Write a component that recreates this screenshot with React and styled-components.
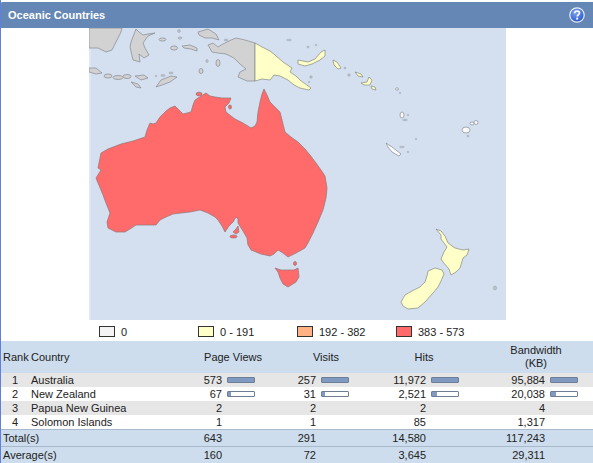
import React from 'react';
import styled, { createGlobalStyle } from 'styled-components';

const GlobalStyle = createGlobalStyle`
html, body {
  margin: 0;
  padding: 0;
  background: #fff;
  overflow: hidden;
}
`
const Panel = styled.div`
box-sizing: border-box;
width: 593px;
height: 463px;
padding-top: 2px;
border-left: 1px solid #5f80e2;
font-family: 'Liberation Sans', Arial, sans-serif;
font-size: 11px;
color: #222;
overflow: hidden;
`
const TitleBar = styled.div`
display: flex;
align-items: center;
justify-content: space-between;
height: 26px;
margin-left: -1px;
padding: 0 8px;
background: #6487b5;
border-top-left-radius: 3px;
`
const Title = styled.div`
font-size: 11px;
font-weight: bold;
color: #fff;
`
const MapArea = styled.div`
display: flex;
height: 292px;
padding-left: 88px;
`
const Legend = styled.div`
display: flex;
align-items: center;
height: 21px;
padding: 2px 0 0 98px;
box-sizing: border-box;
`
const LegendItem = styled.div`
display: flex;
align-items: center;
width: 99px;
gap: 6px;
`
const Swatch = styled.span`
box-sizing: border-box;
width: 16px;
height: 11px;
border: 1px solid #333;
background: ${p => p.$color};
`
const Row = styled.div`
display: grid;
grid-template-columns: 28px 154px 100px 86px 110px 114px;
align-items: center;
height: ${p => p.$height}px;
background: ${p => p.$bg};
border-top: ${p => p.$line ? '1px solid #a9b9cc' : 'none'};
box-sizing: border-box;
line-height: 13px;
`
const RankCell = styled.div`
text-align: center;
`
const HeadLabel = styled.div`
padding-left: 2px;
`
const CountryCell = styled.div`
padding-left: 2px;
white-space: nowrap;
`
const SummaryLabel = styled.div`
grid-column: span 2;
padding-left: 2px;
`
const HeadCell = styled.div`
text-align: center;
`
const MetricCell = styled.div`
display: flex;
align-items: center;
justify-content: flex-end;
gap: 5px;
padding-right: ${p => p.$pr}px;
`
const Num = styled.span`
text-align: right;
`
const BarSlot = styled.span`
width: 28px;
height: 6px;
flex: none;
`
const Bar = styled.span`
display: block;
box-sizing: border-box;
width: 28px;
height: 6px;
background: #fff;
border: 1px solid #6d7d96;
border-radius: 1px;
overflow: hidden;
`
const BarFill = styled.span`
display: block;
height: 100%;
background: #819ac2;
`

const ocean = '#d4dff0';
const grey = '#d2d2d2';
const yellow = '#ffffc8';
const red = '#ff6a6a';
const white = '#fbfbfb';

const AUSTRALIA = "M101 170L98 168L101 153L108 149L121 144L133 141L145 137L147 130L150 123L153 124L156 123L160 117L166 111L170 108L175 106L179 110L183 114L187 113L191 112L193 105L195 100L201 96L206 93L210 96L215 97L222 98L231 98L229 103L225 107L226 112L231 116L235 119L243 123L251 128L255 126L257 122L258 112L260 102L262 94L264 89L267 95L270 102L275 107L280 112L282 120L285 132L291 137L298 142L305 149L310 155L316 163L321 170L325 176L327 188L326 198L323 210L318 222L313 233L308 243L305 248L296 253L288 257L283 253L278 250L274 254L270 256L261 254L251 250L248 245L247 238L243 231L238 223L238 219L236 217L233 222L229 226L225 232L222 226L218 220L215 217L208 213L200 210L190 212L181 213L173 214L166 217L160 220L156 225L146 225L136 225L130 229L125 232L116 232L108 228L107 222L110 213L106 203L103 195L101 190L98 183L96 178Z";

const Map = () => (
  <svg width="417" height="292" viewBox="89 28 417 292">
    <defs>
      <filter id="soft" x="-5%" y="-5%" width="110%" height="110%">
        <feGaussianBlur stdDeviation="0.35" />
      </filter>
    </defs>
    <rect x="89" y="28" width="417" height="292" fill={ocean} />
    <rect x="89" y="28" width="2" height="292" fill="#dde8f6" />
    <g filter="url(#soft)">
      <g fill={grey} stroke="#858a90" strokeWidth="0.7" strokeLinejoin="round">
        <path d="M89 48L98 48L106 52L112 50L116 42L121 32L122 28L89 28Z" />
        <path d="M136 29L131 42L130 47L133 60L140 62L139 54L144 58L149 55L145 48L143 43L148 36L155 33L148 34L143 35L139 32Z" />
        <path d="M198 32L208 29L216 34L219 40L212 38L205 38L199 35Z" />
        <path d="M208 45L213 43L218 47L223 44L231 40L236 38L245 40L255 43L255 81L247 81L238 77L240 72L246 69L240 64L234 58L226 54L218 53L212 52Z" />
        <ellipse cx="162.500" cy="39.500" rx="3.500" ry="1.500" />
        <ellipse cx="174" cy="48" rx="3.500" ry="2" />
        <path d="M182 46L190 45L197 48L197 51L191 49L184 48Z" />
        <ellipse cx="218" cy="63" rx="2" ry="3.500" />
        <ellipse cx="201" cy="71" rx="2" ry="2.500" />
        <path d="M89 68L96 68L102 73L96 74L89 72Z" />
        <ellipse cx="108" cy="76" rx="4" ry="2" />
        <ellipse cx="118" cy="77.500" rx="5" ry="2" />
        <ellipse cx="127" cy="76.500" rx="4" ry="2" />
        <path d="M135 76L144 75L148 78L141 80Z" />
        <path d="M131 82L138 84L141 88L136 87Z" />
        <path d="M156 87L161 80L171 76L177 77L170 82L162 85Z" />
      </g>
      <g fill="#b9c0c8" stroke="#98a0aa" strokeWidth="0.4">
        <ellipse cx="180" cy="38" rx="2" ry="1.200" />
        <circle cx="179" cy="31" r="1.500" />
        <ellipse cx="226" cy="40" rx="2" ry="1" />
        <ellipse cx="207" cy="61" rx="1.300" ry="1.500" />
        <ellipse cx="289" cy="40" rx="2.500" ry="0.800" />
        <ellipse cx="163" cy="75.500" rx="2.200" ry="1" />
        <ellipse cx="171" cy="73" rx="2.200" ry="1" />
        <circle cx="156" cy="76" r="0.800" />
        <circle cx="311" cy="77" r="1.300" />
        <circle cx="309" cy="82" r="0.800" />
        <circle cx="345" cy="68" r="1" />
        <circle cx="349" cy="75" r="1.300" />
        <circle cx="400" cy="93" r="0.800" />
        <circle cx="408" cy="115" r="0.800" />
        <ellipse cx="405" cy="120" rx="2.500" ry="0.800" />
        <circle cx="416" cy="139" r="0.800" />
        <circle cx="408" cy="152" r="0.800" />
        <ellipse cx="402" cy="147" rx="2.500" ry="0.800" />
        <circle cx="468" cy="136" r="1" />
        <circle cx="308" cy="47" r="1" />
        <circle cx="316" cy="45" r="0.800" />
        <ellipse cx="495" cy="288" rx="1.800" ry="2" />
      </g>
      <g fill={yellow} stroke="#858a7c" strokeWidth="0.7" strokeLinejoin="round">
        <path d="M255 43L262 47L270 51L275 55L283 62L292 68L290 72L296 76L300 80L304 83L311 88L309 90L300 88L294 85L288 80L280 76L274 75L270 80L262 79L255 81Z" />
        <path d="M298 60L308 62L315 59L321 52L325 50L325 56L320 60L312 64L305 66L298 64Z" />
        <path d="M333 60L337 62L341 68L338 69L334 65Z" />
        <path d="M355 72L361 74L363 77L358 76Z" />
        <path d="M361 83L367 82L369 77L372 80L370 85L364 85Z" />
        <path d="M371 86L375 87L376 90L372 89Z" />
        <path d="M436 229L441 231L445 236L448 243L452 246L455 248L463 250L469 249L467 255L463 258L460 268L456 272L451 275L449 269L443 262L441 259L444 252L447 247L444 243L441 239L441 235Z" />
        <path d="M435 268L442 270L444 274L441 281L438 287L433 293L425 302L418 308L408 309L403 306L401 302L405 295L412 291L420 287L425 282L427 276L428 271Z" />
      </g>
      <g fill={white} stroke="#858a90" strokeWidth="0.7" strokeLinejoin="round">
        <path d="M386 143L392 147L401 154L399 156L392 152L388 147Z" />
        <ellipse cx="466" cy="130" rx="4" ry="3" />
        <ellipse cx="472" cy="123.500" rx="2" ry="1.500" />
        <ellipse cx="476" cy="122.500" rx="2" ry="2" />
        <ellipse cx="402" cy="115" rx="2" ry="3" />
        <ellipse cx="397" cy="89" rx="1.500" ry="1.200" />
      </g>
      <g fill={red} stroke="#8f7676" strokeWidth="0.7" strokeLinejoin="round">
        <path d={AUSTRALIA} />
        <path d="M275 268L281 270L288 270L294 270L298 268L299 277L296 282L288 287L283 284L280 278L278 272Z" />
        <ellipse cx="233.500" cy="236.500" rx="3.500" ry="1.500" />
        <path d="M233 232L236 229L238 226L239 232L236 234Z" />
        <ellipse cx="295" cy="263.500" rx="1.500" ry="2" />
        <ellipse cx="199" cy="94" rx="3" ry="1.800" />
        <ellipse cx="230" cy="107" rx="1.500" ry="2" />
      </g>
    </g>
  </svg>
);

const HelpIcon = () => (
  <svg width="16" height="16" viewBox="0 0 16 16">
    <defs>
      <radialGradient id="helpBall" cx="0.400" cy="0.300" r="0.800">
        <stop offset="0" stopColor="#7fa6f2" />
        <stop offset="1" stopColor="#1f4fc4" />
      </radialGradient>
    </defs>
    <circle cx="8" cy="8" r="7.200" fill="url(#helpBall)" stroke="#e8eefa" strokeWidth="1.200" />
    <path d="M5.600 6.200C5.700 4.700 6.800 4 8.100 4C9.500 4 10.500 4.800 10.500 6C10.500 7.500 8.300 7.700 8.300 9.400" fill="none" stroke="#fff" strokeWidth="1.700" />
    <circle cx="8.200" cy="11.700" r="1.100" fill="#fff" />
  </svg>
);

const METRIC_PADS = [28, 20, 20, 15];
const HEADS = ['Page Views', 'Visits', 'Hits', <>Bandwidth<br />(KB)</>];

const countries = [
  { rank: 1, name: 'Australia', cells: [['573', 100], ['257', 100], ['11,972', 100], ['95,884', 100]] },
  { rank: 2, name: 'New Zealand', cells: [['67', 12], ['31', 12], ['2,521', 21], ['20,038', 21]] },
  { rank: 3, name: 'Papua New Guinea', cells: [['2'], ['2'], ['2'], ['4']] },
  { rank: 4, name: 'Solomon Islands', cells: [['1'], ['1'], ['85'], ['1,317']] },
];

const summary = [
  { label: 'Total(s)', values: ['643', '291', '14,580', '117,243'] },
  { label: 'Average(s)', values: ['160', '72', '3,645', '29,311'] },
];

const legend = [
  ['#f4f4f4', '0'],
  [yellow, '0 - 191'],
  ['#ffb385', '192 - 382'],
  [red, '383 - 573'],
];

const Metric = ({ index, value, pct }) => (
  <MetricCell $pr={METRIC_PADS[index]}>
    <Num>{value}</Num>
    {pct ? (
      <Bar><BarFill style={{ width: `${pct}%` }} /></Bar>
    ) : (
      <BarSlot />
    )}
  </MetricCell>
);

const App = () => (
  <Panel>
    <GlobalStyle />
    <TitleBar>
      <Title>Oceanic Countries</Title>
      <HelpIcon />
    </TitleBar>
    <MapArea>
      <Map />
    </MapArea>
    <Legend>
      {legend.map(([color, label]) => (
        <LegendItem key={label}>
          <Swatch $color={color} />
          {label}
        </LegendItem>
      ))}
    </Legend>
    <Row $height={32} $bg="#cddded">
      <HeadLabel>Rank</HeadLabel>
      <CountryCell>Country</CountryCell>
      {HEADS.map((h, i) => <HeadCell key={i}>{h}</HeadCell>)}
    </Row>
    {countries.map((c, i) => (
      <Row key={c.rank} $height={14} $bg={i % 2 === 0 ? '#e6e6e6' : '#fff'}>
        <RankCell>{c.rank}</RankCell>
        <CountryCell>{c.name}</CountryCell>
        {c.cells.map(([value, pct], j) => (
          <Metric key={j} index={j} value={value} pct={pct} />
        ))}
      </Row>
    ))}
    {summary.map(s => (
      <Row key={s.label} $height={17} $bg="#cddded" $line>
        <SummaryLabel>{s.label}</SummaryLabel>
        {s.values.map((v, j) => (
          <Metric key={j} index={j} value={v} />
        ))}
      </Row>
    ))}
  </Panel>
);

export default App;
